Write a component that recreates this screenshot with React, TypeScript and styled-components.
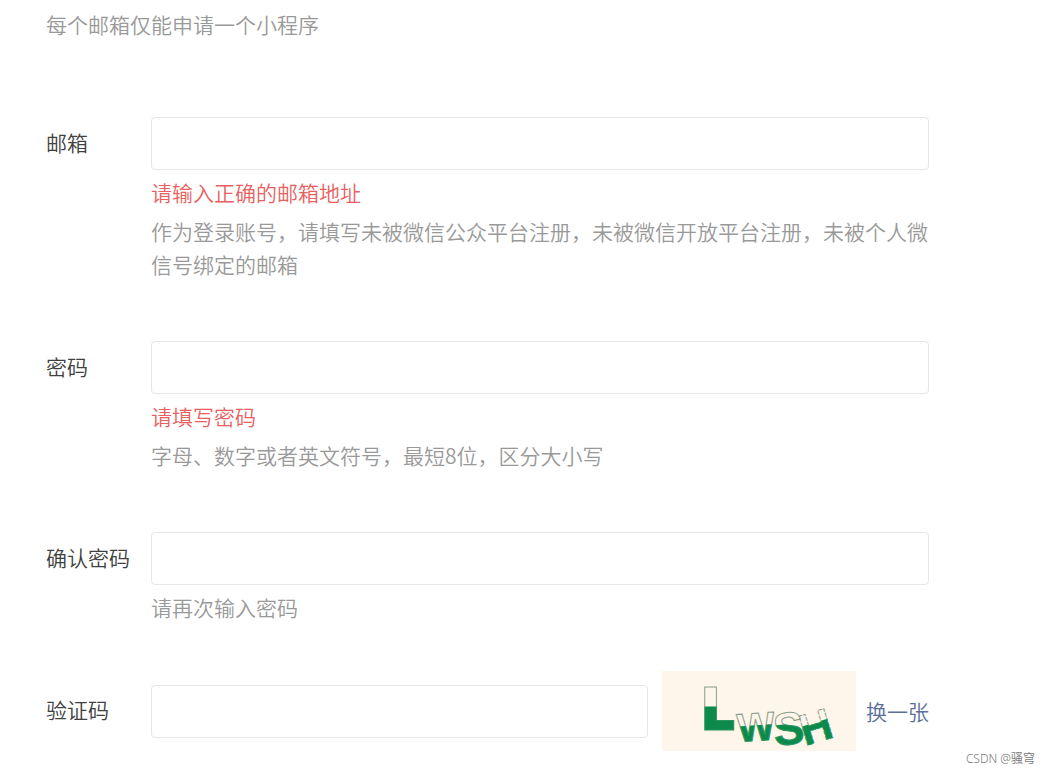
import React from "react";
import styled, { createGlobalStyle } from "styled-components";

const GlobalStyle = createGlobalStyle`
  *, *::before, *::after { box-sizing: border-box; }
  html, body { margin: 0; background: #fff; }
  body {
    font-family: "Noto Sans CJK SC", sans-serif;
    font-size: 21px;
    font-weight: 350;
    line-height: 33px;
    color: #404040;
  }
  #root { min-height: 100vh; display: flex; flex-direction: column; }
`;

const Page = styled.main`
  position: relative;
  flex: 1;
  padding: 8px 121px 36px 46px;
`;

const Intro = styled.p`
  margin: 0 0 76px;
  color: #999;
`;

const Form = styled.form`
  display: flex;
  flex-direction: column;
  gap: 60px;
`;

const Row = styled.div`
  display: grid;
  grid-template-columns: 105px minmax(0, 1fr);
  align-items: start;
`;

const Label = styled.label`
  padding-top: 9px;
`;

const Controls = styled.div`
  display: flex;
  flex-direction: column;
  gap: 6px;
`;

const Input = styled.input`
  display: block;
  width: 100%;
  min-width: 0;
  height: 53px;
  padding: 0 14px;
  border: 1px solid #e7e7eb;
  border-radius: 4px;
  background: #fff;
  color: inherit;
  font: inherit;
  outline: none;
  &:focus { border-color: #9a9a9a; }
`;

const Message = styled.p<{ $error?: boolean }>`
  margin: 0;
  color: ${(p) => (p.$error ? "#e86160" : "#999")};
`;

const CodeLine = styled.div`
  display: flex;
  align-items: center;
`;

const CaptchaBox = styled.svg`
  flex: none;
  width: 194px;
  height: 80px;
  margin: -13px 10px -13px 14px;
  background: #fef6eb;
  overflow: visible;
`;

const Refresh = styled.a`
  flex: none;
  color: #5b6f99;
  text-decoration: none;
`;

const Watermark = styled.small`
  position: absolute;
  right: 15px;
  bottom: 6px;
  font-family: "Noto Sans", "Noto Sans CJK SC", sans-serif;
  font-size: 12px;
  line-height: 18px;
  color: #777;
`;

type Glyph = {
  char: string;
  font: string;
  x: number;
  y: number;
  size: number;
  angle: number;
  level: number;
  dash?: string;
};

const glyphs: Glyph[] = [
  { char: "L", font: "Inter", x: 40, y: 59, size: 59, angle: 0, level: 23 },
  { char: "W", font: "Liberation Sans", x: 76, y: 71, size: 40, angle: -4, level: 15 },
  { char: "S", font: "Liberation Sans", x: 113, y: 75, size: 46, angle: -6, level: 20 },
  { char: "H", font: "Liberation Sans", x: 143, y: 75, size: 44, angle: -17, level: 19, dash: "4 1" },
];

function Captcha() {
  return (
    <CaptchaBox viewBox="0 0 194 80" role="img" aria-label="验证码图片">
      <defs>
        {glyphs.map((g) => (
          <linearGradient
            key={g.char}
            id={`fill-${g.char}`}
            gradientUnits="userSpaceOnUse"
            x1="0"
            y1={-g.level - 1}
            x2="0"
            y2={-g.level}
          >
            <stop offset="0" stopColor="#0b8a4c" stopOpacity="0" />
            <stop offset="1" stopColor="#0b8a4c" />
          </linearGradient>
        ))}
        {glyphs.map((g) => (
          <linearGradient
            key={g.char}
            id={`edge-${g.char}`}
            gradientUnits="userSpaceOnUse"
            x1="0"
            y1={-g.level - 1}
            x2="0"
            y2={-g.level}
          >
            <stop offset="0" stopColor="#8a9e8a" />
            <stop offset="1" stopColor="#2c9460" />
          </linearGradient>
        ))}
      </defs>
      {glyphs.map((g) => (
        <text
          key={g.char}
          transform={`translate(${g.x} ${g.y}) rotate(${g.angle})`}
          fontFamily={`"${g.font}", sans-serif`}
          fontWeight="900"
          fontSize={g.size}
          fill={`url(#fill-${g.char})`}
          stroke={`url(#edge-${g.char})`}
          strokeWidth="1"
          strokeDasharray={g.dash}
        >
          {g.char}
        </text>
      ))}
    </CaptchaBox>
  );
}

type FieldProps = { id: string; label: string; type: string; error?: string; hint: string };

function Field({ id, label, type, error, hint }: FieldProps) {
  return (
    <Row>
      <Label htmlFor={id}>{label}</Label>
      <Controls>
        <Input id={id} name={id} type={type} autoComplete="off" aria-describedby={`${id}-hint`} />
        {error && <Message $error>{error}</Message>}
        <Message id={`${id}-hint`}>{hint}</Message>
      </Controls>
    </Row>
  );
}

export default function App() {
  return (
    <>
      <GlobalStyle />
      <Page>
        <Intro>每个邮箱仅能申请一个小程序</Intro>
        <Form onSubmit={(e) => e.preventDefault()} noValidate>
          <Field
            id="email"
            label="邮箱"
            type="email"
            error="请输入正确的邮箱地址"
            hint="作为登录账号，请填写未被微信公众平台注册，未被微信开放平台注册，未被个人微信号绑定的邮箱"
          />
          <Field
            id="password"
            label="密码"
            type="password"
            error="请填写密码"
            hint="字母、数字或者英文符号，最短8位，区分大小写"
          />
          <Field id="confirm" label="确认密码" type="password" hint="请再次输入密码" />
          <Row>
            <Label htmlFor="code">验证码</Label>
            <CodeLine>
              <Input id="code" name="code" type="text" autoComplete="off" />
              <Captcha />
              <Refresh href="#refresh">换一张</Refresh>
            </CodeLine>
          </Row>
        </Form>
        <Watermark>CSDN @骚穹</Watermark>
      </Page>
    </>
  );
}
